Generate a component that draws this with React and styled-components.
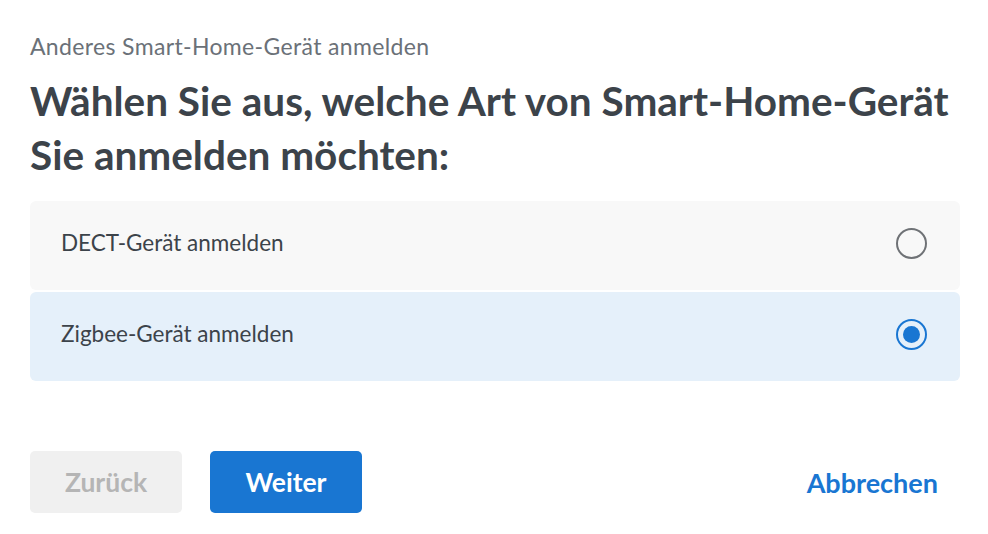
import React, { useState } from 'react';
import styled, { createGlobalStyle } from 'styled-components';

const GlobalStyle = createGlobalStyle`
  html, body {
    margin: 0;
    padding: 0;
    background: #ffffff;
  }
  body {
    font-family: Lato, "Noto Sans", "Liberation Sans", sans-serif;
    color: #3c434a;
  }
`;

const Page = styled.div`
  box-sizing: border-box;
  width: 988px;
  height: 534px;
  padding: 33px 28px 0 30px;
  display: flex;
  flex-direction: column;
`;

const Overline = styled.div`
  font-size: 23px;
  line-height: 26px;
  letter-spacing: 0.35px;
  color: #6b7178;
`;

const Title = styled.h1`
  margin: 15px 0 19px;
  font-size: 40.5px;
  line-height: 54px;
  font-weight: 700;
  color: #3c434a;
`;

const OptionList = styled.div`
  display: flex;
  flex-direction: column;
  gap: 2px;
`;

const Option = styled.label`
  box-sizing: border-box;
  height: 89px;
  display: flex;
  align-items: center;
  justify-content: space-between;
  padding: 0 33px 5px 31px;
  border-radius: 6px;
  background: ${(p) => (p.$selected ? '#e5f0fa' : '#f8f8f8')};
  font-size: 22.5px;
  line-height: 28px;
  color: #3c434a;
  cursor: pointer;
`;

const Radio = styled.span`
  box-sizing: border-box;
  width: 31px;
  height: 31px;
  border-radius: 50%;
  border: 2.5px solid ${(p) => (p.$checked ? '#1976d2' : '#6f7276')};
  display: flex;
  align-items: center;
  justify-content: center;

  &::after {
    content: '';
    display: ${(p) => (p.$checked ? 'block' : 'none')};
    width: 17px;
    height: 17px;
    border-radius: 50%;
    background: #1976d2;
  }
`;

const Footer = styled.div`
  margin-top: 70px;
  display: flex;
  align-items: center;
  gap: 28px;
`;

const Button = styled.button`
  width: 152px;
  height: 62px;
  border: none;
  border-radius: 5px;
  font-family: inherit;
  font-size: 26.5px;
  font-weight: 700;
  background: ${(p) => (p.$primary ? '#1976d2' : '#f0f0f0')};
  color: ${(p) => (p.$primary ? '#ffffff' : '#b5b5b5')};
  cursor: ${(p) => (p.disabled ? 'default' : 'pointer')};
`;

const TextButton = styled.button`
  margin-left: auto;
  margin-right: 22px;
  border: none;
  background: none;
  padding: 0;
  font-family: inherit;
  font-size: 27px;
  font-weight: 700;
  color: #1976d2;
  cursor: pointer;
`;

const options = [
  { id: 'dect', label: 'DECT-Gerät anmelden' },
  { id: 'zigbee', label: 'Zigbee-Gerät anmelden' },
];

export default function App() {
  const [selected, setSelected] = useState('zigbee');

  return (
    <>
      <GlobalStyle />
      <Page>
        <Overline>Anderes Smart-Home-Gerät anmelden</Overline>
        <Title>
          Wählen Sie aus, welche Art von Smart-Home-Gerät
          <br />
          Sie anmelden möchten:
        </Title>
        <OptionList>
          {options.map((o) => (
            <Option
              key={o.id}
              $selected={selected === o.id}
              onClick={() => setSelected(o.id)}
            >
              {o.label}
              <Radio $checked={selected === o.id} />
            </Option>
          ))}
        </OptionList>
        <Footer>
          <Button disabled>Zurück</Button>
          <Button $primary>Weiter</Button>
          <TextButton>Abbrechen</TextButton>
        </Footer>
      </Page>
    </>
  );
}
